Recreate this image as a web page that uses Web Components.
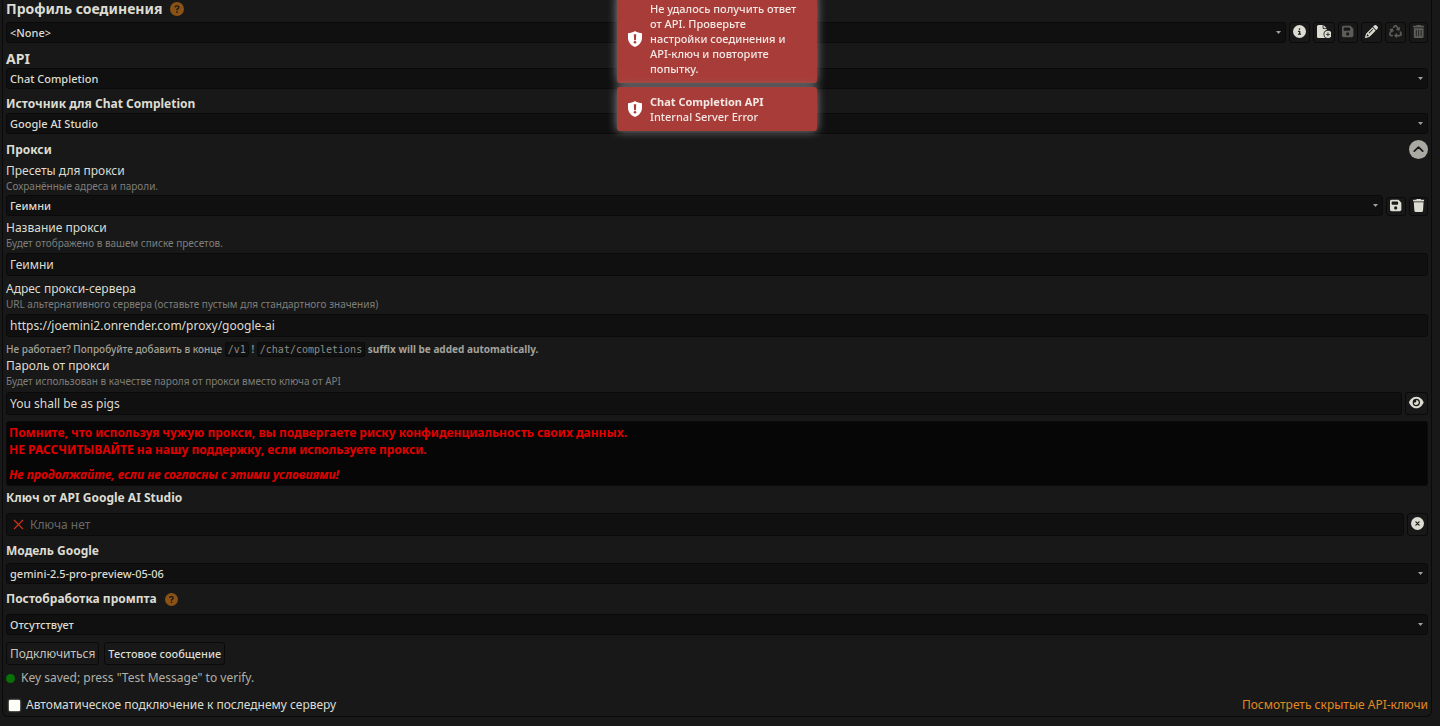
<!DOCTYPE html>
<html lang="ru">
<head>
<meta charset="utf-8">
<meta name="viewport" content="width=device-width, initial-scale=1">
<title>API</title>
<style>
  body {
    margin: 0;
    background: #181818;
    color: #dcdcd2;
    font-family: "Noto Sans", sans-serif;
    font-size: 12px;
    --field: #101010;
    --line: #0a0a0a;
    --muted: #7e7e7a;
    --accent: #e18a24;
  }
</style>
</head>
<body>
<connection-panel></connection-panel>
<toast-stack>
  <toast-message>Не удалось получить ответ от API. Проверьте настройки соединения и API-ключ и повторите попытку.</toast-message>
  <toast-message><span slot="title">Chat Completion API</span>Internal Server Error</toast-message>
</toast-stack>

<script>
const CIRCLE = 'M256 512A256 256 0 1 0 256 0a256 256 0 1 0 0 512z';
const TRASH_LID = 'M135.2 17.7C140.6 6.8 151.7 0 163.8 0H284.2c12.1 0 23.2 6.8 28.6 17.7L320 32h96c17.7 0 32 14.3 32 32s-14.3 32-32 32H32C14.3 96 0 81.7 0 64S14.3 32 32 32h96l7.2-14.3z';

// name: [view box width, markup]
const ICONS = {
  info: [512, `<path d="${CIRCLE}M216 336h24V272H216c-13.3 0-24-10.7-24-24s10.7-24 24-24h48c13.3 0 24 10.7 24 24v88h8c13.3 0 24 10.7 24 24s-10.7 24-24 24H216c-13.3 0-24-10.7-24-24s10.7-24 24-24zm40-208a32 32 0 1 1 0 64 32 32 0 1 1 0-64z"/>`],
  'file-plus': [576, '<path d="M0 64C0 28.7 28.7 0 64 0H224V128c0 17.7 14.3 32 32 32H384v38.6C310.1 219.5 256 287.4 256 368c0 59.1 29.1 111.3 73.7 143.3c-3.2 .5-6.4 .7-9.7 .7H64c-35.3 0-64-28.7-64-64V64zm384 64H256V0L384 128zm48 96a144 144 0 1 1 0 288 144 144 0 1 1 0-288zm16 80c0-8.8-7.2-16-16-16s-16 7.2-16 16v48H368c-8.8 0-16 7.2-16 16s7.2 16 16 16h48v48c0 8.8 7.2 16 16 16s16-7.2 16-16V384h48c8.8 0 16-7.2 16-16s-7.2-16-16-16H448V304z"/>'],
  save: [448, '<path d="M64 32C28.7 32 0 60.7 0 96V416c0 35.3 28.7 64 64 64H384c35.3 0 64-28.7 64-64V173.3c0-17-6.7-33.3-18.7-45.3L352 50.7C340 38.7 323.7 32 306.7 32H64zm0 96c0-17.7 14.3-32 32-32H288c17.7 0 32 14.3 32 32v64c0 17.7-14.3 32-32 32H96c-17.7 0-32-14.3-32-32V128zM224 288a64 64 0 1 1 0 128 64 64 0 1 1 0-128z"/>'],
  pencil: [512, '<path d="M410.3 231l11.3-11.3-33.9-33.9-62.1-62.1L291.7 89.8l-11.3 11.3-22.6 22.6L58.6 322.9c-10.4 10.4-18 23.3-22.2 37.4L1 480.7c-2.5 8.4-.2 17.5 6.1 23.7s15.3 8.5 23.7 6.1l120.3-35.4c14.1-4.2 27-11.8 37.4-22.2L387.7 253.7 410.3 231zM160 399.4l-9.1 22.7c-4 3.1-8.5 5.4-13.3 6.9L59.4 452l23-78.1c1.4-4.9 3.8-9.4 6.9-13.3l22.7-9.1v32c0 8.8 7.2 16 16 16h32zM362.7 18.7L348.3 33.2 325.7 55.8 314.3 67.1l33.9 33.9 62.1 62.1 33.9 33.9 11.3-11.3 22.6-22.6 14.5-14.5c25-25 25-65.5 0-90.5L453.3 18.7c-25-25-65.5-25-90.5 0zm-47.4 168l-144 144c-6.2 6.2-16.4 6.2-22.6 0s-6.2-16.4 0-22.6l144-144c6.2-6.2 16.4-6.2 22.6 0s6.2 16.4 0 22.6z"/>'],
  recycle: [512, '<path d="M174.7 45.1C192.2 17 223 0 256 0s63.8 17 81.3 45.1l38.6 61.7 27-15.6c8.4-4.9 18.9-4.2 26.6 1.7s11.1 15.9 8.6 25.3l-23.4 87.4c-3.4 12.8-16.6 20.4-29.4 17l-87.4-23.4c-9.4-2.5-16.3-10.4-17.6-20s3.4-19.1 11.8-23.9l28.4-16.4L283 79c-5.8-9.3-16-15-27-15s-21.2 5.7-27 15l-17.5 28c-9.2 14.8-28.6 19.5-43.6 10.5c-15.3-9.2-20.2-29.2-10.7-44.4l17.5-28zM429.5 251.9c15-9 34.4-4.3 43.6 10.5l24.4 39.1c9.4 15.1 14.4 32.4 14.6 50.2c.3 53.1-42.7 96.4-95.8 96.4L320 448v32c0 9.7-5.8 18.5-14.8 22.2s-19.3 1.7-26.2-5.2l-64-64c-9.4-9.4-9.4-24.6 0-33.9l64-64c6.9-6.9 17.2-8.9 26.2-5.2s14.8 12.5 14.8 22.2v32l96.2 0c17.6 0 31.9-14.4 31.8-32c0-5.9-1.7-11.7-4.8-16.7l-24.4-39.1c-9.5-15.2-4.7-35.2 10.7-44.4zm-364.6-31L36 204.2c-8.4-4.9-13.1-14.3-11.8-23.9s8.2-17.5 17.6-20l87.4-23.4c12.8-3.4 26 4.2 29.4 17L182 241.2c2.5 9.4-.9 19.3-8.6 25.3s-18.2 6.6-26.6 1.7l-26.5-15.3L68.8 335.3c-3.1 5-4.8 10.8-4.8 16.7c-.1 17.6 14.2 32 31.8 32l32.2 0c17.7 0 32 14.3 32 32s-14.3 32-32 32l-32.2 0C42.7 448-.3 404.8 0 351.6c.1-17.8 5.1-35.1 14.6-50.2l50.3-80.5z"/>'],
  'trash-can': [448, `<path d="${TRASH_LID}M32 128H416V448c0 35.3-28.7 64-64 64H96c-35.3 0-64-28.7-64-64V128zm96 64c-8.8 0-16 7.2-16 16V432c0 8.8 7.2 16 16 16s16-7.2 16-16V208c0-8.8-7.2-16-16-16zm96 0c-8.8 0-16 7.2-16 16V432c0 8.8 7.2 16 16 16s16-7.2 16-16V208c0-8.8-7.2-16-16-16zm96 0c-8.8 0-16 7.2-16 16V432c0 8.8 7.2 16 16 16s16-7.2 16-16V208c0-8.8-7.2-16-16-16z"/>`],
  trash: [448, `<path d="${TRASH_LID}M416 128L394.8 467c-1.6 25.3-22.6 45-47.9 45H101.1c-25.3 0-46.3-19.7-47.9-45L32 128z"/>`],
  eye: [576, '<path d="M288 32c-80.8 0-145.5 36.8-192.6 80.6C48.6 156 17.3 208 2.5 243.7c-3.3 7.9-3.3 16.7 0 24.6C17.3 304 48.6 356 95.4 399.4C142.5 443.2 207.2 480 288 480s145.5-36.8 192.6-80.6c46.8-43.5 78.1-95.4 93-131.1c3.3-7.9 3.3-16.7 0-24.6c-14.9-35.7-46.2-87.7-93-131.1C433.5 68.8 368.8 32 288 32zM144 256a144 144 0 1 1 288 0 144 144 0 1 1 -288 0zm144-64c0 35.3-28.7 64-64 64c-7.1 0-13.9-1.2-20.3-3.3c-5.5-1.8-11.9 1.6-11.7 7.4c.3 6.9 1.3 13.8 3.2 20.7c13.7 51.2 66.4 81.6 117.6 67.9s81.6-66.4 67.9-117.6c-11.1-41.5-47.8-69.4-88.6-71.1c-5.8-.2-9.2 6.1-7.4 11.7c2.1 6.4 3.3 13.2 3.3 20.3z"/>'],
  clear: [512, `<path d="${CIRCLE}"/><path d="M192 192l128 128M320 192l-128 128" stroke="#181818" stroke-width="48" stroke-linecap="round"/>`],
  'chevron-up': [512, `<path d="${CIRCLE}"/><path d="M142 302l114-110 114 110" fill="none" stroke="#181818" stroke-width="46" stroke-linecap="round" stroke-linejoin="round"/>`],
  question: [512, `<path d="${CIRCLE}"/><path d="M186 178c6-26 24-38 50-38h32c62 0 76 74 28 102l-40 24v22" fill="none" stroke="#181818" stroke-width="48" stroke-linecap="round"/><circle cx="256" cy="368" r="32" fill="#181818"/>`],
  cross: [512, '<path d="M60 60l392 392M452 60L60 452" stroke="currentColor" stroke-width="56" stroke-linecap="round"/>'],
  caret: [512, '<path d="M0 100h512L256 400z"/>'],
  shield: [512, '<path d="M256 0C190 44 112 66 32 68v150c0 140 86 238 224 294 138-56 224-154 224-294V68C400 66 322 44 256 0z"/><path d="M216 104h80l-12 190h-56z" fill="#a83c38"/><circle cx="256" cy="360" r="40" fill="#a83c38"/>'],
};

const escapeHtml = (text) => text.replace(/&/g, '&amp;').replace(/</g, '&lt;').replace(/"/g, '&quot;');

class UiIcon extends HTMLElement {
  connectedCallback() {
    const [width, markup] = ICONS[this.getAttribute('name')];
    this.attachShadow({ mode: 'open' }).innerHTML = `
      <style>
        :host {
          display: inline-flex;
          font-size: 13px;
        }
        svg {
          height: 1em;
          fill: currentColor;
        }
      </style>
      <svg viewBox="0 0 ${width} 512" aria-hidden="true">${markup}</svg>
    `;
  }
}

class IconButton extends HTMLElement {
  connectedCallback() {
    this.attachShadow({ mode: 'open' }).innerHTML = `
      <style>
        :host {
          display: flex;
          flex: none;
        }
        button {
          display: flex;
          align-items: center;
          justify-content: center;
          padding: 0 3px 2px;
          border: 1px solid var(--line);
          border-radius: 3px;
          background: none;
          color: inherit;
          cursor: pointer;
        }
        button:disabled ui-icon {
          opacity: 0.35;
        }
      </style>
      <button type="button" aria-label="${this.title}" ${this.hasAttribute('disabled') ? 'disabled' : ''}>
        <ui-icon name="${this.getAttribute('icon')}"></ui-icon>
      </button>
    `;
  }
}

const FIELD_STYLE = `
  :host {
    display: block;
  }
  label {
    display: block;
    font-size: 12px;
    line-height: 16px;
  }
  :host([heading]) label {
    font-weight: 700;
    line-height: 18px;
  }
  :host([heading="large"]) label {
    font-size: 14px;
  }
  .title {
    display: flex;
    align-items: center;
    gap: 8px;
  }
  .title ui-icon {
    color: #8a5215;
  }
  :host([heading="large"]) .title ui-icon {
    font-size: 14px;
  }
  .hint {
    display: block;
    color: var(--muted);
    font-size: 10px;
    line-height: 15px;
  }
  .row {
    display: flex;
    gap: 3px;
    margin-top: var(--control-gap, 0);
  }
  .box {
    display: grid;
    flex: 1;
    min-width: 0;
    align-items: center;
  }
  select, input {
    grid-area: 1 / 1;
    box-sizing: border-box;
    width: 100%;
    margin: 0;
    border: 1px solid var(--line);
    border-radius: 3px;
    outline: none;
    background: var(--field);
    color: inherit;
    font-family: inherit;
  }
  select {
    appearance: none;
    height: 21px;
    padding: 0 16px 0 3px;
    font-size: 11px;
    font-weight: 500;
  }
  input {
    height: 23px;
    padding: 0 3px;
    font-size: 12px;
  }
  .mark {
    grid-area: 1 / 1;
    pointer-events: none;
  }
  .caret {
    justify-self: end;
    margin-right: 5px;
    color: #a0a09a;
    font-size: 5px;
  }
`;

class BaseField extends HTMLElement {
  connectedCallback() {
    const hint = this.getAttribute('hint');
    this.attachShadow({ mode: 'open' }).innerHTML = `
      <style>${FIELD_STYLE}${this.extraStyle}</style>
      <div class="title">
        <label for="control">${this.getAttribute('label')}</label>
        ${this.hasAttribute('help') ? '<ui-icon name="question"></ui-icon>' : ''}
      </div>
      ${hint ? `<span class="hint">${hint}</span>` : ''}
      <div class="row">
        <div class="box">${this.control()}</div>
        <slot></slot>
      </div>
    `;
  }

  get value() {
    return escapeHtml(this.getAttribute('value'));
  }

  get extraStyle() {
    return '';
  }
}

class SelectField extends BaseField {
  control() {
    return `
      <select id="control"><option>${this.value}</option></select>
      <ui-icon class="mark caret" name="caret"></ui-icon>
    `;
  }
}

class InputField extends BaseField {
  control() {
    return `<input id="control" type="text" autocomplete="off" value="${this.value}">`;
  }
}

class KeyField extends BaseField {
  get extraStyle() {
    return `
      input {
        padding-left: 23px;
      }
      input::placeholder {
        color: #686866;
        opacity: 1;
      }
      .cross {
        margin-left: 7px;
        color: #c93216;
        font-size: 11px;
      }
    `;
  }

  control() {
    return `
      <input id="control" type="text" autocomplete="off" placeholder="${this.getAttribute('placeholder')}">
      <ui-icon class="mark cross" name="cross"></ui-icon>
    `;
  }
}

class ProxyDrawer extends HTMLElement {
  constructor() {
    super();
    this.attachShadow({ mode: 'open' });
    this.shadowRoot.innerHTML = `
      <style>
        :host {
          display: block;
        }
        .header {
          display: flex;
          align-items: center;
          justify-content: space-between;
          height: 20px;
        }
        h4 {
          margin: 0;
          font-size: 12px;
        }
        button {
          display: flex;
          padding: 0;
          border: 0;
          background: none;
          color: #aaaaa2;
        }
        button ui-icon {
          font-size: 19px;
        }
      </style>
      <div class="header">
        <h4>Прокси</h4>
        <button type="button" aria-expanded="true" aria-label="Прокси"><ui-icon name="chevron-up"></ui-icon></button>
      </div>
      <slot></slot>
    `;
    this.button = this.shadowRoot.querySelector('button');
    this.content = this.shadowRoot.querySelector('slot');
    this.toggle = this.toggle.bind(this);
  }

  connectedCallback() {
    this.button.addEventListener('click', this.toggle);
  }

  disconnectedCallback() {
    this.button.removeEventListener('click', this.toggle);
  }

  toggle() {
    const open = this.button.getAttribute('aria-expanded') === 'true';
    this.button.setAttribute('aria-expanded', String(!open));
    this.content.style.display = open ? 'none' : '';
  }
}

class ProxyWarning extends HTMLElement {
  constructor() {
    super();
    this.attachShadow({ mode: 'open' });
    this.shadowRoot.innerHTML = `
      <style>
        :host {
          display: block;
          padding: 2px;
          border: 1px solid var(--line);
          border-radius: 3px;
          background: #060606;
          color: #e00000;
          font-size: 12px;
          font-weight: 700;
          line-height: 17px;
        }
        p {
          margin: 0 0 8px;
        }
      </style>
      <p>Помните, что используя чужую прокси, вы подвергаете риску конфиденциальность своих данных.<br>НЕ РАССЧИТЫВАЙТЕ на нашу поддержку, если используете прокси.</p>
      <em>Не продолжайте, если не согласны с этими условиями!</em>
    `;
  }
}

class ConnectionPanel extends HTMLElement {
  constructor() {
    super();
    this.attachShadow({ mode: 'open' });
    this.shadowRoot.innerHTML = `
      <style>
        :host {
          display: block;
          margin: 0 8px 0 2px;
          padding: 0 3px 2px;
          border: 1px solid var(--line);
          border-top: 0;
          border-radius: 0 0 6px 6px;
        }
        .profile {
          --control-gap: 4px;
        }
        .api {
          margin-top: 7px;
        }
        .source {
          margin-top: 6px;
        }
        proxy-drawer {
          margin-top: 5px;
        }
        .presets {
          margin-top: 4px;
          --control-gap: 1px;
        }
        .presets icon-button {
          margin-top: 2px;
        }
        .name, .url {
          margin-top: 4px;
          --control-gap: 2px;
        }
        .url {
          margin-top: 5px;
        }
        .password {
          --control-gap: 3px;
        }
        .note {
          margin-top: 4px;
          color: #a2a29b;
          font-size: 10px;
          font-weight: 500;
          line-height: 16px;
        }
        code {
          padding: 1px 2px;
          border: 1px solid var(--line);
          border-radius: 3px;
          background: var(--field);
          color: #8c8c86;
          font-family: "DejaVu Sans Mono", monospace;
          font-size: 10px;
          font-weight: 400;
        }
        proxy-warning {
          margin-top: 6px;
        }
        .key {
          margin-top: 3px;
          --control-gap: 6px;
        }
        .model {
          margin-top: 6px;
          --control-gap: 3px;
        }
        .processing {
          margin-top: 6px;
          --control-gap: 6px;
        }
        .actions {
          display: flex;
          gap: 5px;
          margin-top: 7px;
        }
        .actions button {
          height: 23px;
          padding: 0 3px;
          border: 1px solid var(--line);
          border-radius: 3px;
          background: none;
          color: inherit;
          font-family: inherit;
          font-size: 11px;
          font-weight: 500;
        }
        .actions .connect {
          color: #c4c4bb;
          font-size: 12px;
          font-weight: 400;
        }
        .status {
          display: flex;
          align-items: center;
          gap: 6px;
          margin-top: 4px;
          color: #b0b0a8;
          line-height: 18px;
        }
        .status::before {
          content: "";
          width: 9px;
          height: 9px;
          border-radius: 50%;
          background: #077007;
        }
        .footer {
          display: flex;
          align-items: center;
          justify-content: space-between;
          margin-top: 9px;
          line-height: 18px;
        }
        .footer label {
          display: flex;
          align-items: center;
          gap: 6px;
        }
        .footer input {
          appearance: none;
          width: 11px;
          height: 11px;
          margin: 0 0 0 3px;
          border-radius: 1px;
          background: #fffffa;
          box-shadow: 0 0 2px #fffffa;
        }
        a {
          color: var(--accent);
          text-decoration: none;
        }
      </style>
      <select-field class="profile" heading="large" help label="Профиль соединения" value="&lt;None&gt;">
        <icon-button icon="info" title="Сведения"></icon-button>
        <icon-button icon="file-plus" title="Создать"></icon-button>
        <icon-button icon="save" title="Сохранить" disabled></icon-button>
        <icon-button icon="pencil" title="Изменить"></icon-button>
        <icon-button icon="recycle" title="Обновить" disabled></icon-button>
        <icon-button icon="trash-can" title="Удалить" disabled></icon-button>
      </select-field>
      <select-field class="api" heading="large" label="API" value="Chat Completion"></select-field>
      <select-field class="source" heading label="Источник для Chat Completion" value="Google AI Studio"></select-field>
      <proxy-drawer>
        <select-field class="presets" label="Пресеты для прокси" hint="Сохранённые адреса и пароли." value="Геимни">
          <icon-button icon="save" title="Сохранить"></icon-button>
          <icon-button icon="trash" title="Удалить"></icon-button>
        </select-field>
        <input-field class="name" label="Название прокси" hint="Будет отображено в вашем списке пресетов." value="Геимни"></input-field>
        <input-field class="url" label="Адрес прокси-сервера" hint="URL альтернативного сервера (оставьте пустым для стандартного значения)" value="https://joemini2.onrender.com/proxy/google-ai"></input-field>
        <div class="note">Не работает? Попробуйте добавить в конце <code>/v1</code> ! <code>/chat/completions</code> <b>suffix will be added automatically.</b></div>
        <input-field class="password" label="Пароль от прокси" hint="Будет использован в качестве пароля от прокси вместо ключа от API" value="You shall be as pigs">
          <icon-button icon="eye" title="Показать"></icon-button>
        </input-field>
        <proxy-warning></proxy-warning>
      </proxy-drawer>
      <key-field class="key" heading label="Ключ от API Google AI Studio" placeholder="Ключа нет">
        <icon-button icon="clear" title="Очистить"></icon-button>
      </key-field>
      <select-field class="model" heading label="Модель Google" value="gemini-2.5-pro-preview-05-06"></select-field>
      <select-field class="processing" heading help label="Постобработка промпта" value="Отсутствует"></select-field>
      <div class="actions">
        <button type="button" class="connect">Подключиться</button>
        <button type="button">Тестовое сообщение</button>
      </div>
      <div class="status">Key saved; press "Test Message" to verify.</div>
      <div class="footer">
        <label><input type="checkbox">Автоматическое подключение к последнему серверу</label>
        <a href="#keys">Посмотреть скрытые API-ключи</a>
      </div>
    `;
  }
}

class ToastStack extends HTMLElement {
  constructor() {
    super();
    this.attachShadow({ mode: 'open' });
    this.shadowRoot.innerHTML = `
      <style>
        :host {
          position: fixed;
          top: -6px;
          left: 0;
          right: 6px;
          display: flex;
          flex-direction: column;
          align-items: center;
          gap: 4px;
          pointer-events: none;
        }
      </style>
      <slot></slot>
    `;
  }
}

class ToastMessage extends HTMLElement {
  constructor() {
    super();
    this.attachShadow({ mode: 'open' });
    this.shadowRoot.innerHTML = `
      <style>
        :host {
          display: flex;
          align-items: center;
          gap: 7px;
          box-sizing: border-box;
          width: 200px;
          padding: 7px 14px 7px 10px;
          border-radius: 3px;
          background: #a83c38;
          box-shadow: 0 0 10px #8c8c8c;
          color: #f4e8e4;
          font-size: 11px;
          font-weight: 500;
          line-height: 15px;
        }
        ui-icon {
          flex: none;
          color: #fff;
          font-size: 16px;
        }
        slot[name="title"] {
          display: block;
          font-weight: 700;
        }
      </style>
      <ui-icon name="shield"></ui-icon>
      <div><slot name="title"></slot><slot></slot></div>
    `;
  }
}

customElements.define('ui-icon', UiIcon);
customElements.define('icon-button', IconButton);
customElements.define('select-field', SelectField);
customElements.define('input-field', InputField);
customElements.define('key-field', KeyField);
customElements.define('proxy-drawer', ProxyDrawer);
customElements.define('proxy-warning', ProxyWarning);
customElements.define('connection-panel', ConnectionPanel);
customElements.define('toast-stack', ToastStack);
customElements.define('toast-message', ToastMessage);
</script>
</body>
</html>
